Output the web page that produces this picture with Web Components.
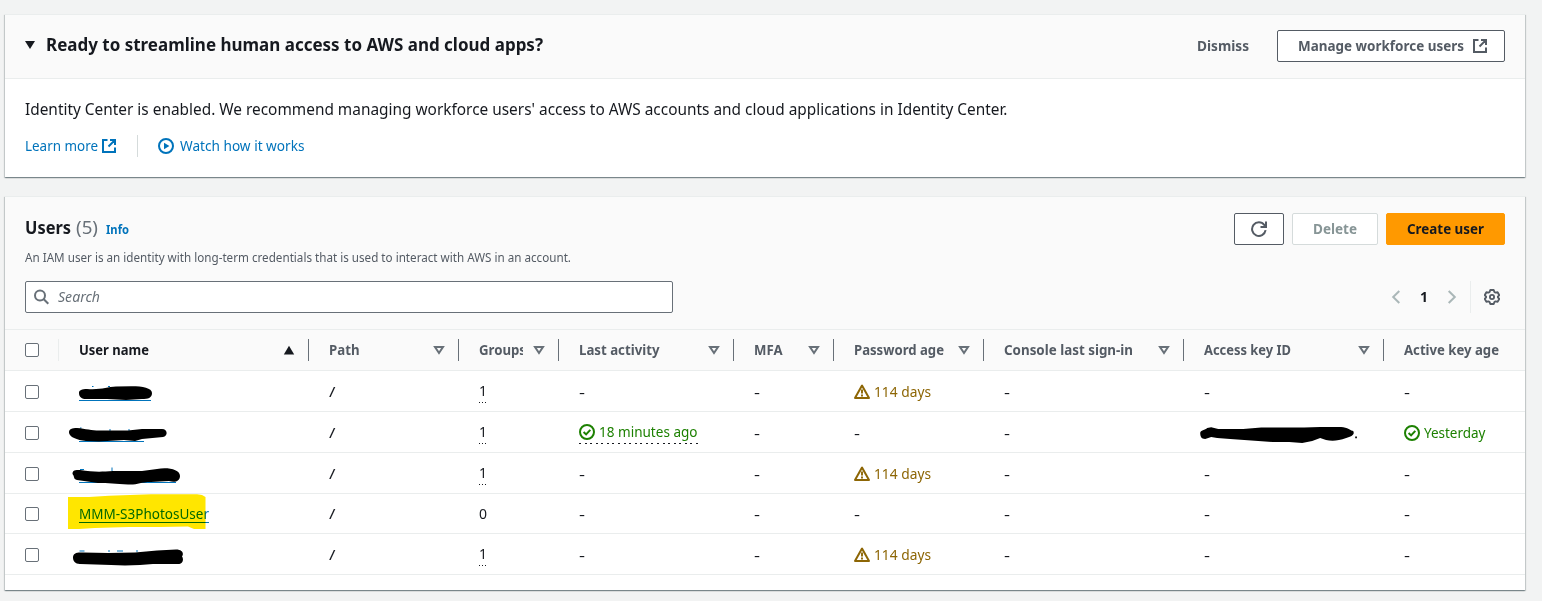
<!DOCTYPE html>
<html lang="en">
<head>
<meta charset="utf-8">
<title>IAM Users</title>
<style>
html,body{margin:0;height:100%}
body{background:#f2f3f3;font:14px/22px "Noto Sans","Open Sans",sans-serif;color:#16191f;overflow:hidden}
</style>
</head>
<body>
<iam-page></iam-page>
<script>
const define=(name,html,setup)=>customElements.define(name,class extends HTMLElement{
  constructor(){super();this.attachShadow({mode:'open'});}
  connectedCallback(){
    this.shadowRoot.innerHTML=typeof html==='function'?html(this):html;
    if(setup)setup(this,this.shadowRoot);
  }
});

/* Text condensed so that it fills the width given in "w". */
define('fit-text','<style>:host{display:inline-block;white-space:nowrap}span{display:inline-block;white-space:pre;transform-origin:0 50%}</style><span><slot></slot></span>',(el,root)=>{
  const span=root.querySelector('span'),w=parseFloat(el.getAttribute('w'));
  if(w){
    const natural=span.getBoundingClientRect().width;
    span.style.transform='scaleX('+w/natural+')';
    el.style.width=w+'px';
  }
});

const icons={
  external:'<path d="M6.5 2H2v12h12V9.5M9 2h5v5M13.6 2.4 7.5 8.5" fill="none" stroke="currentColor" stroke-width="2"/>',
  play:'<circle cx="8" cy="8" r="7" fill="none" stroke="currentColor" stroke-width="2"/><path d="M6 4.8v6.4L11.4 8z" fill="currentColor"/>',
  refresh:'<path d="M14.6 9.2A6.8 6.8 0 1 1 13.3 4L15 5.6" fill="none" stroke="currentColor" stroke-width="2"/><path d="M15 .5V6H9.5" fill="none" stroke="currentColor" stroke-width="2"/>',
  search:'<circle cx="6" cy="6.5" r="5" fill="none" stroke="currentColor" stroke-width="2"/><path d="m9.500 10 4.800 4.800" stroke="currentColor" stroke-width="2"/>',
  left:'<path d="M11.3 2 5.2 8l6.1 6" fill="none" stroke="currentColor" stroke-width="2"/>',
  right:'<path d="M4.7 2l6.1 6-6.1 6" fill="none" stroke="currentColor" stroke-width="2"/>',
  gear:'<path d="M6.3 1h3.4l.7 2 1.1.6 2.1-.4 1.7 3-1.4 1.5v.6l1.4 1.6-1.7 2.9-2.1-.4-1.1.6-.7 2H6.3l-.7-2-1.1-.6-2.1.4-1.7-2.9 1.4-1.6v-.6L.7 6.2l1.7-3 2.1.4 1.1-.6z" fill="none" stroke="currentColor" stroke-width="1.9" stroke-linejoin="round"/><circle cx="8" cy="8" r="2.1" fill="none" stroke="currentColor" stroke-width="1.8"/>',
  check:'<circle cx="8" cy="8" r="7" fill="none" stroke="currentColor" stroke-width="2"/><path d="m4.6 8 2.5 2.4 4.2-4.5" fill="none" stroke="currentColor" stroke-width="2"/>',
  warn:'<path d="M8 1.6 1 14h14z" fill="none" stroke="currentColor" stroke-width="2" stroke-linejoin="round"/><path d="M8 5.6v3.9M8 10.6v1.9" stroke="currentColor" stroke-width="1.9"/>',
  up:'<path d="M8 3.8 13.2 12.4H2.8z" fill="currentColor"/>',
  sort:'<path d="M4 5h8l-4 6z" fill="none" stroke="currentColor" stroke-width="2"/>',
  caret:'<path d="M3 4h10L8 12z" fill="currentColor"/>'
};
define('ui-icon',el=>`<style>:host{display:block;width:16px;height:16px;flex:none}svg{display:block;width:100%;height:100%}</style><svg viewBox="0 0 16 16">${icons[el.getAttribute('name')]}</svg>`);

define('ui-button',`<style>
:host{display:flex;align-items:center;justify-content:center;box-sizing:border-box;height:32px;border:1px solid #545b64;border-radius:2px;background:#fff;color:#545b64;font-weight:700;gap:8px}
:host([kind=link]){border-color:transparent;background:none}
:host([kind=disabled]){border-color:#d5dbdb;color:#879596}
:host([kind=primary]){border-color:#f90;background:#f90;color:#16191f}
</style><slot></slot>`);

define('ui-card',`<style>
:host{display:block;box-sizing:border-box;background:#fff;border-top:1px solid #eaeded;box-shadow:0 1px 1px 0 rgba(0,28,36,.3),1px 1px 1px 0 rgba(0,28,36,.15),-1px 1px 1px 0 rgba(0,28,36,.15)}
</style><slot></slot>`);

define('ui-checkbox','<style>:host{display:block;box-sizing:border-box;width:14px;height:14px;border:1px solid #687078;border-radius:2px;background:#fff}</style>');

define('welcome-banner',`<style>
:host{display:block}
header{display:flex;box-sizing:border-box;height:64px;padding:15px 20px 0;background:#fafafa;border-bottom:1px solid #eaeded}
.caret{margin:7px 8px 0 -3px}
.title{font-size:18px;font-weight:700;padding-top:3px;flex:1}
.dismiss{width:93px;margin-right:8px}
.manage{width:228px;padding-left:4px}
.body{padding:19px 20px 0}
.lead{font-size:16px}
.links{display:flex;align-items:center;color:#0073bb;margin-top:15px}
.links i{width:1px;height:22px;background:#d5dbdb;margin:0 20px}
</style>
<header><ui-icon name="caret" class="caret"></ui-icon><div class="title"><fit-text w="497">Ready to streamline human access to AWS and cloud apps?</fit-text></div>
<ui-button kind="link" class="dismiss"><fit-text w="52">Dismiss</fit-text></ui-button>
<ui-button class="manage"><fit-text w="166">Manage workforce users</fit-text><ui-icon name="external"></ui-icon></ui-button></header>
<div class="body"><div class="lead"><fit-text w="982.500">Identity Center is enabled. We recommend managing workforce users' access to AWS accounts and cloud applications in Identity Center.</fit-text></div>
<div class="links"><fit-text w="73">Learn more</fit-text><ui-icon name="external" style="margin-left:3px"></ui-icon><i></i><ui-icon name="play" style="margin-right:6px"></ui-icon><fit-text w="124.500">Watch how it works</fit-text></div></div>`);

define('users-toolbar',`<style>
:host{display:block;box-sizing:border-box;height:132px;background:#fafafa;padding:16px 20px 0}
.row{display:flex}
.top{height:52px}
.head{flex:1;padding-top:3px}
.title{display:flex;align-items:baseline;height:22px;font-size:18px}
.title b{margin-right:5px}.count{color:#687078;margin-right:7.500px}
.info{font-size:12px;font-weight:700;color:#0073bb}
.desc{font-size:12px;line-height:18px;color:#545b64;margin-top:11px}
.actions{display:flex;gap:8px}
.tools{height:32px;margin-top:16px;align-items:center;justify-content:space-between}
.search{display:flex;align-items:center;box-sizing:border-box;width:648px;height:32px;border:1px solid #687078;border-radius:2px;background:#fff;color:#687078;padding-left:8px;gap:8px;font-style:italic}
.pager{display:flex;align-items:center;color:#aab7b8}
.pager b{width:8px;margin:0 16px;color:#16191f}
.pager i{width:1px;height:32px;background:#eaeded;margin:0 13px 0 10px}
.gear{color:#545b64;margin-right:5px}
</style>
<div class="row top"><div class="head"><div class="title"><b><fit-text w="46">Users</fit-text></b><span class="count"><fit-text w="22">(5)</fit-text></span><fit-text class="info" w="23">Info</fit-text></div>
<div class="desc"><fit-text w="546">An IAM user is an identity with long-term credentials that is used to interact with AWS in an account.</fit-text></div></div>
<div class="actions"><ui-button style="width:50px"><ui-icon name="refresh"></ui-icon></ui-button><ui-button kind="disabled" style="width:86px"><fit-text w="44">Delete</fit-text></ui-button><ui-button kind="primary" style="width:119px"><fit-text w="77">Create user</fit-text></ui-button></div></div>
<div class="row tools"><div class="search"><ui-icon name="search"></ui-icon><fit-text w="42">Search</fit-text></div>
<div class="pager"><ui-icon name="left"></ui-icon><b>1</b><ui-icon name="right"></ui-icon><i></i><ui-icon name="gear" class="gear"></ui-icon></div></div>`);

const grid='grid-template-columns:54px 250px 150px 100px 175px 100px 150px 200px 200px 141px';
const columns=[['User name',70],['Path',30.5],['Groups',47],['Last activity',80.5],['MFA',28.5],['Password age',90],['Console last sign-in',129],['Access key ID',87],['Active key age',95]];

define('users-header',`<style>
:host{display:grid;${grid};box-sizing:border-box;height:42px;border:solid #eaeded;border-width:1px 0;background:#fafafa;color:#545b64;font-weight:700}
div{display:flex;align-items:center;justify-content:space-between;box-sizing:border-box;height:22px;margin-top:9px;padding:0 11px 0 20px;border-right:1px solid #687078}
.select{border-color:#eaeded}
.label{overflow:hidden;height:22px}
.clip{width:44px}
.first{color:#16191f}
div:last-child{border:0}
ui-icon{color:#687078}.first ui-icon{color:#16191f}
</style><div class="select"><ui-checkbox></ui-checkbox></div>`+columns.map(([t,w],i)=>`<div class="${i?'':'first'}"><span class="label ${t==='Groups'?'clip':''}"><fit-text w="${w}">${t}</fit-text></span>${i<8?`<ui-icon name="${i?'sort':'up'}"></ui-icon>`:''}</div>`).join(''));

define('status-text',el=>`<style>:host{display:flex;align-items:center;gap:4px;width:max-content}:host([name=check]){color:#1d8102}:host([name=warn]){color:#8d6605}</style><ui-icon name="${el.getAttribute('name')}"></ui-icon><fit-text w="${el.getAttribute('w')}">${el.textContent}</fit-text>`);

/* Marker strokes over the name cells; the origin is the cell's top left corner. */
const marks=[
 '<path d="M20 29.5h72" stroke="#0073bb"/><path d="M33 15.500h1.500M49 15.500h2" stroke="#0073bb"/><path d="M20 22C20 19 23 18 28 18C42 19 48 16 57 15.5L72 15.3C83 15.2 93 17 93 22C93 27 89 28 83 28L67 29L48 28L27 28C23 28 20 26 20 22Z"/>',
 '<path d="M20 29.500h65" stroke="#0073bb"/><path d="M21 16h1.500M50 18h2M69 18h2" stroke="#0073bb"/><path d="M10 20.500C10 17 13 16 18 16C28 17 34 19 43 18.500L69 18.500L83 17L103 17C109 17 109 24 104 25L83 27L76 29L65 28L40 29.500L27 29C18 28 10 25 10 20.500Z"/>',
 '<path d="M20 29.500h97" stroke="#0073bb"/><path d="M21 16.500h4M53 18v-3.500" stroke="#0073bb"/><path d="M13.500 21C13.500 17 16 17 21 17C34 19 41 19 54 18L83 18L98 16C108 14 121 16 121 23C121 28 116 30 110 28L92 29C81 29 79 32 69 31.500C57 31 49 30 39 30L18 27C14 26 16 24 13.500 21Z"/>',
 '<path style="mix-blend-mode:multiply" fill="#ffe600" d="M9 3H30L50 1.800L71 1L92 .2H138L143 1L146.500 3V35H135L129 32.500L101 33H70L36 34L20 35H9Z"/>',
 '<path d="M20 29.500h100" stroke="#0073bb"/><path d="M20.500 17h5M49 17h2M58 17h6M77 17h2" stroke="#0073bb"/><path d="M14 23.500C14 19 18 18 24 18.500L49 19L76 18.500L98 16.500L117 15.500C124 15.500 125 20 123 22.500C125 25 124 30 119 30L94 30L81 31L66 31.500L52 31L21 30C16 30 14 27 14 23.500Z"/>'
];
const keyMark='<path transform="translate(-.8)" d="M17 21C17 18 22 18 24 16L28 15.300L35 17L60 17L78 15.500H121L137 15H158C164 15 168 19 170 19C172 23 168 24 163 26C152 30 144 29 137 26L129 29L119 31L106 30H89L75 29L47 27L34 26L28 25L22 27C18 27 17 24 17 21Z"/><path d="M171.200 24.500h1.700v1.700h-1.700z"/>';
const svg=s=>`<svg class="mark">${s}</svg>`;
const dash='<span class="dash"><fit-text w="6">-</fit-text></span>';

define('user-row',el=>{
  const n=+el.getAttribute('index'),active=n===1,named=n===3;
  const group=named?'<span>0</span>':'<span class="dots">1</span>';
  const cells=[
    (named?'<a><fit-text w="130">MMM-S3PhotosUser</fit-text></a>':'')+svg(marks[n]),
    '<fit-text w="6.500">/</fit-text>',group,
    active?'<span class="dots wide"><status-text name="check" w="98.500">18 minutes ago</status-text></span>':dash,
    dash,
    n%2?dash:'<status-text name="warn" w="57">114 days</status-text>',
    dash,
    active?svg(keyMark):dash,
    active?'<status-text name="check" w="61.500">Yesterday</status-text>':dash
  ];
  return `<style>
:host{display:grid;${grid};box-sizing:border-box;height:${named?40:41}px;border-bottom:1px solid #eaeded}
div{position:relative;padding:${named?9:10}px 0 0 20px}
.select{padding-top:${named?13:14}px}
a{display:block;width:130px;height:19px;color:#0073bb;border-bottom:1px solid #0073bb}
.dash{display:block;padding-top:1px}
.dots{display:block;width:8px;height:22px;line-height:20px;background:repeating-linear-gradient(90deg,#16191f 0 1px,transparent 1px 3px) 0 100%/100% 1px no-repeat}
.wide{width:119px;line-height:20px;background-image:repeating-linear-gradient(90deg,#16191f 0 2px,transparent 2px 5.570px)}
.mark{position:absolute;left:0;top:0;width:180px;height:40px;overflow:visible;mix-blend-mode:multiply}
</style><div class="select"><ui-checkbox></ui-checkbox></div>`+cells.map(c=>`<div>${c}</div>`).join('');
});

define('iam-page',`<style>
:host{display:flex;flex-direction:column;gap:19px;padding:14px 17px 0 5px}
.banner{height:163px}.users{height:394px}
</style>
<ui-card class="banner"><welcome-banner></welcome-banner></ui-card>
<ui-card class="users"><users-toolbar></users-toolbar><users-header></users-header>${[0,1,2,3,4].map(i=>`<user-row index="${i}"></user-row>`).join('')}</ui-card>`);
</script>
</body>
</html>
